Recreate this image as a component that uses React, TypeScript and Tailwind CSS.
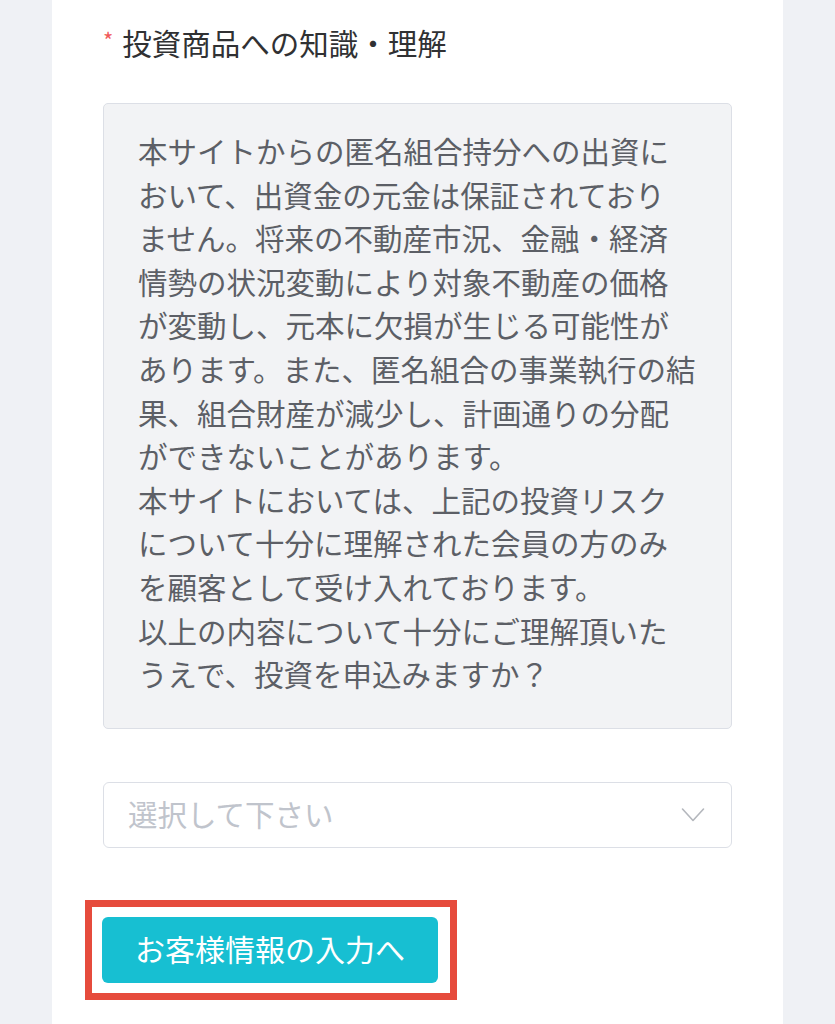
const lines = [
  "本サイトからの匿名組合持分への出資に",
  "おいて、出資金の元金は保証されており",
  "ません。将来の不動産市況、金融・経済",
  "情勢の状況変動により対象不動産の価格",
  "が変動し、元本に欠損が生じる可能性が",
  "あります。また、匿名組合の事業執行の結",
  "果、組合財産が減少し、計画通りの分配",
  "ができないことがあります。",
  "本サイトにおいては、上記の投資リスク",
  "について十分に理解された会員の方のみ",
  "を顧客として受け入れております。",
  "以上の内容について十分にご理解頂いた",
  "うえで、投資を申込みますか？",
];

export default function App() {
  return (
    <div
      className="min-h-[1024px] bg-[#eff1f5]"
      style={{ fontFamily: '"Noto Sans CJK JP", "Noto Sans", sans-serif' }}
    >
      <div className="ml-[52px] w-[731px] min-h-[1024px] bg-white pl-[51px] pr-[51px] pt-[22px]">
        {/* Label */}
        <div className="flex items-center h-[42px]">
          <span className="text-[22px] text-[#f05a5a] mr-[9px] leading-none -mt-[8px]">*</span>
          <span className="text-[29.5px] text-[#303133] leading-none">投資商品への知識・理解</span>
        </div>

        {/* Disclaimer box */}
        <div className="mt-[39px] rounded-[5px] border border-[#dcdfe6] bg-[#f2f3f5] pl-[34px] pt-[25px] pb-[32px]">
          {lines.map((l) => (
            <div key={l} className="whitespace-nowrap text-[29.5px] leading-[43.6px] text-[#5c5f66]">
              {l}
            </div>
          ))}
        </div>

        {/* Select */}
        <div className="mt-[53px] h-[66px] rounded-[6px] border border-[#dcdfe6] flex items-center justify-between pl-[24px] pr-[26px]">
          <span className="text-[29.5px] text-[#c0c4cc] -mt-[4px]">選択して下さい</span>
          <svg width="24" height="16" viewBox="0 0 24 16" fill="none">
            <path d="M1.5 2 L12 13.5 L22.5 2" stroke="#b4b7bd" strokeWidth="1.6" strokeLinecap="round" strokeLinejoin="round" />
          </svg>
        </div>

        {/* Button with annotation frame */}
        <div className="mt-[52px] -ml-[18px] w-[372px] h-[100px] border-[7px] border-[#e64b3c] flex items-center pl-[10px]">
          <button className="w-[336px] h-[66px] rounded-[6px] bg-[#17bfd2] text-white text-[30px] leading-none pb-[4px]">
            お客様情報の入力へ
          </button>
        </div>
      </div>
    </div>
  );
}
